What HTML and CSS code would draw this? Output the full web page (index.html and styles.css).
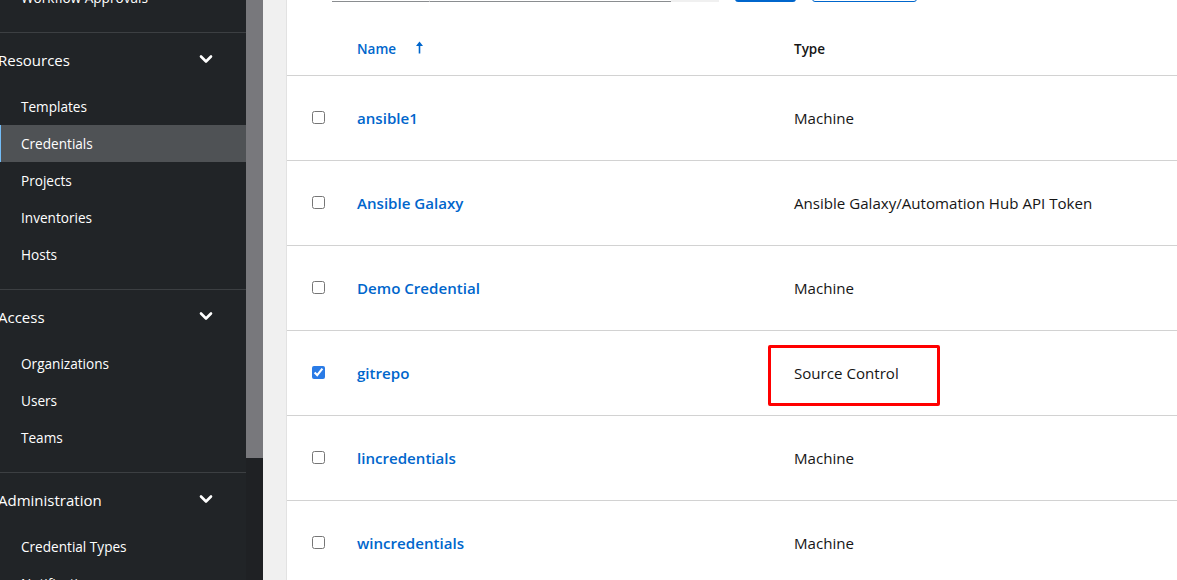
FILE: index.html
```html
<!DOCTYPE html>
<html lang="en">
<head>
<meta charset="utf-8">
<title>Credentials</title>
<link rel="stylesheet" href="styles.css">
</head>
<body>
<div class="app">
  <nav class="sidebar">
    <div class="nav">
      <div class="group">
        <ul class="items">
          <li class="item">Workflow Approvals</li>
        </ul>
      </div>
      <div class="group">
        <div class="group-head"><span class="group-title">Resources</span>
          <svg class="chev" width="14" height="10" viewBox="0 0 14 10"><path d="M2 2.5 L7 7.5 L12 2.5" fill="none" stroke="#fff" stroke-width="2.6" stroke-linecap="round" stroke-linejoin="round"/></svg>
        </div>
        <ul class="items">
          <li class="item">Templates</li>
          <li class="item active">Credentials</li>
          <li class="item">Projects</li>
          <li class="item">Inventories</li>
          <li class="item">Hosts</li>
        </ul>
      </div>
      <div class="group">
        <div class="group-head"><span class="group-title">Access</span>
          <svg class="chev" width="14" height="10" viewBox="0 0 14 10"><path d="M2 2.5 L7 7.5 L12 2.5" fill="none" stroke="#fff" stroke-width="2.6" stroke-linecap="round" stroke-linejoin="round"/></svg>
        </div>
        <ul class="items">
          <li class="item">Organizations</li>
          <li class="item">Users</li>
          <li class="item">Teams</li>
        </ul>
      </div>
      <div class="group">
        <div class="group-head"><span class="group-title">Administration</span>
          <svg class="chev" width="14" height="10" viewBox="0 0 14 10"><path d="M2 2.5 L7 7.5 L12 2.5" fill="none" stroke="#fff" stroke-width="2.6" stroke-linecap="round" stroke-linejoin="round"/></svg>
        </div>
        <ul class="items">
          <li class="item">Credential Types</li>
          <li class="item">Notifications</li>
        </ul>
      </div>
    </div>
  </nav>
  <div class="scrollbar"><div class="thumb"></div></div>
  <main class="main">
    <section class="card">
      <div class="toolbar">
        <div class="select"></div>
        <div class="text-input"></div>
        <div class="search-btn"></div>
        <div class="btn-primary"></div>
        <div class="btn-secondary"></div>
      </div>
      <div class="table">
        <div class="row head">
          <div class="cell"></div>
          <div class="cell name-head">Name
            <svg class="sort" width="9" height="13" viewBox="0 0 9 13"><path d="M4.5 0.5 L8 5 L5.3 5 L5.3 12.5 L3.7 12.5 L3.7 5 L1 5 Z" fill="#06c"/></svg>
          </div>
          <div class="cell type-head">Type</div>
        </div>
        <div class="row">
          <div class="cell"><input type="checkbox" class="check"></div>
          <div class="cell"><a class="link">ansible1</a></div>
          <div class="cell">Machine</div>
        </div>
        <div class="row">
          <div class="cell"><input type="checkbox" class="check"></div>
          <div class="cell"><a class="link">Ansible Galaxy</a></div>
          <div class="cell">Ansible Galaxy/Automation Hub API Token</div>
        </div>
        <div class="row">
          <div class="cell"><input type="checkbox" class="check"></div>
          <div class="cell"><a class="link">Demo Credential</a></div>
          <div class="cell">Machine</div>
        </div>
        <div class="row marked">
          <div class="cell"><input type="checkbox" class="check" checked></div>
          <div class="cell"><a class="link">gitrepo</a></div>
          <div class="cell">Source Control</div>
          <div class="highlight"></div>
        </div>
        <div class="row">
          <div class="cell"><input type="checkbox" class="check"></div>
          <div class="cell"><a class="link">lincredentials</a></div>
          <div class="cell">Machine</div>
        </div>
        <div class="row">
          <div class="cell"><input type="checkbox" class="check"></div>
          <div class="cell"><a class="link">wincredentials</a></div>
          <div class="cell">Machine</div>
        </div>
      </div>
    </section>
  </main>
</div>
</body>
</html>
```

FILE: styles.css
```css
* { box-sizing: border-box; }
html, body {
  margin: 0;
  padding: 0;
  width: 1177px;
  height: 580px;
  overflow: hidden;
  font-family: "Open Sans", "Noto Sans", sans-serif;
  color: #151515;
}
.app {
  display: flex;
  height: 580px;
}
.sidebar {
  width: 246px;
  flex: none;
  background: #212427;
  color: #fff;
  overflow: hidden;
}
.nav {
  margin-top: -21px;
}
.group {
  border-bottom: 1px solid #3c3f42;
  padding-bottom: 16px;
}
.group-head {
  height: 55px;
  display: flex;
  align-items: center;
  justify-content: space-between;
  padding-right: 33px;
  padding-bottom: 2px;
  font-size: 15px;
}
.group-title {
  margin-left: -2px;
}
.chev { display: block; margin-top: -1px; }
.items {
  list-style: none;
  margin: 0;
  padding: 0;
}
.item {
  height: 37px;
  display: flex;
  align-items: center;
  padding-left: 21px;
  font-size: 13.6px;
}
.item.active {
  background: #4f5255;
  box-shadow: inset 1px 0 0 #73bcf7;
}
.scrollbar {
  width: 17px;
  flex: none;
  background: #1f2124;
}
.thumb {
  height: 458px;
  background: #78787c;
}
.main {
  flex: 1;
  background: #f0f0f0;
  padding-left: 23px;
  overflow: hidden;
}
.card {
  display: flow-root;
  background: #fff;
  height: 100%;
  border-left: 1px solid #e2e2e2;
}
.toolbar {
  display: flex;
  align-items: stretch;
  height: 36px;
  margin-top: -34px;
  margin-bottom: 22px;
  padding-left: 45px;
}
.select {
  width: 98px;
  border-bottom: 1px solid #8a8d90;
  border-right: 1px solid #f0f0f0;
}
.text-input {
  width: 241px;
  border-bottom: 1px solid #8a8d90;
}
.search-btn {
  width: 48px;
  background: #f0f0f0;
}
.btn-primary {
  width: 61px;
  margin-left: 16px;
  background: #06c;
  border-radius: 3px;
}
.btn-secondary {
  width: 105px;
  margin-left: 16px;
  border: 1px solid #06c;
  border-radius: 3px;
}
.table {
  display: flex;
  flex-direction: column;
}
.row {
  display: grid;
  grid-template-columns: 70px 437px 1fr;
  height: 85px;
  border-bottom: 1px solid #d2d2d2;
  align-items: center;
  font-size: 15.1px;
  position: relative;
}
.row.head {
  height: 52px;
  padding-bottom: 2px;
  font-size: 13.5px;
  font-weight: 600;
}
.cell {
  display: flex;
  align-items: center;
}
.row .cell:first-child {
  padding-left: 25px;
}
.check {
  margin: -1px 0 0 0;
  width: 13px;
  height: 13px;
  accent-color: #2a7be6;
}
.name-head {
  color: #06c;
}
.sort {
  margin-left: 19px;
  margin-top: -3px;
}
.type-head {
  color: #151515;
}
.link {
  color: #06c;
  font-weight: 600;
  text-decoration: none;
}
.highlight {
  position: absolute;
  left: 481px;
  top: 14px;
  width: 172px;
  height: 61px;
  border: 3px solid #f00;
  border-radius: 2px;
}
```
